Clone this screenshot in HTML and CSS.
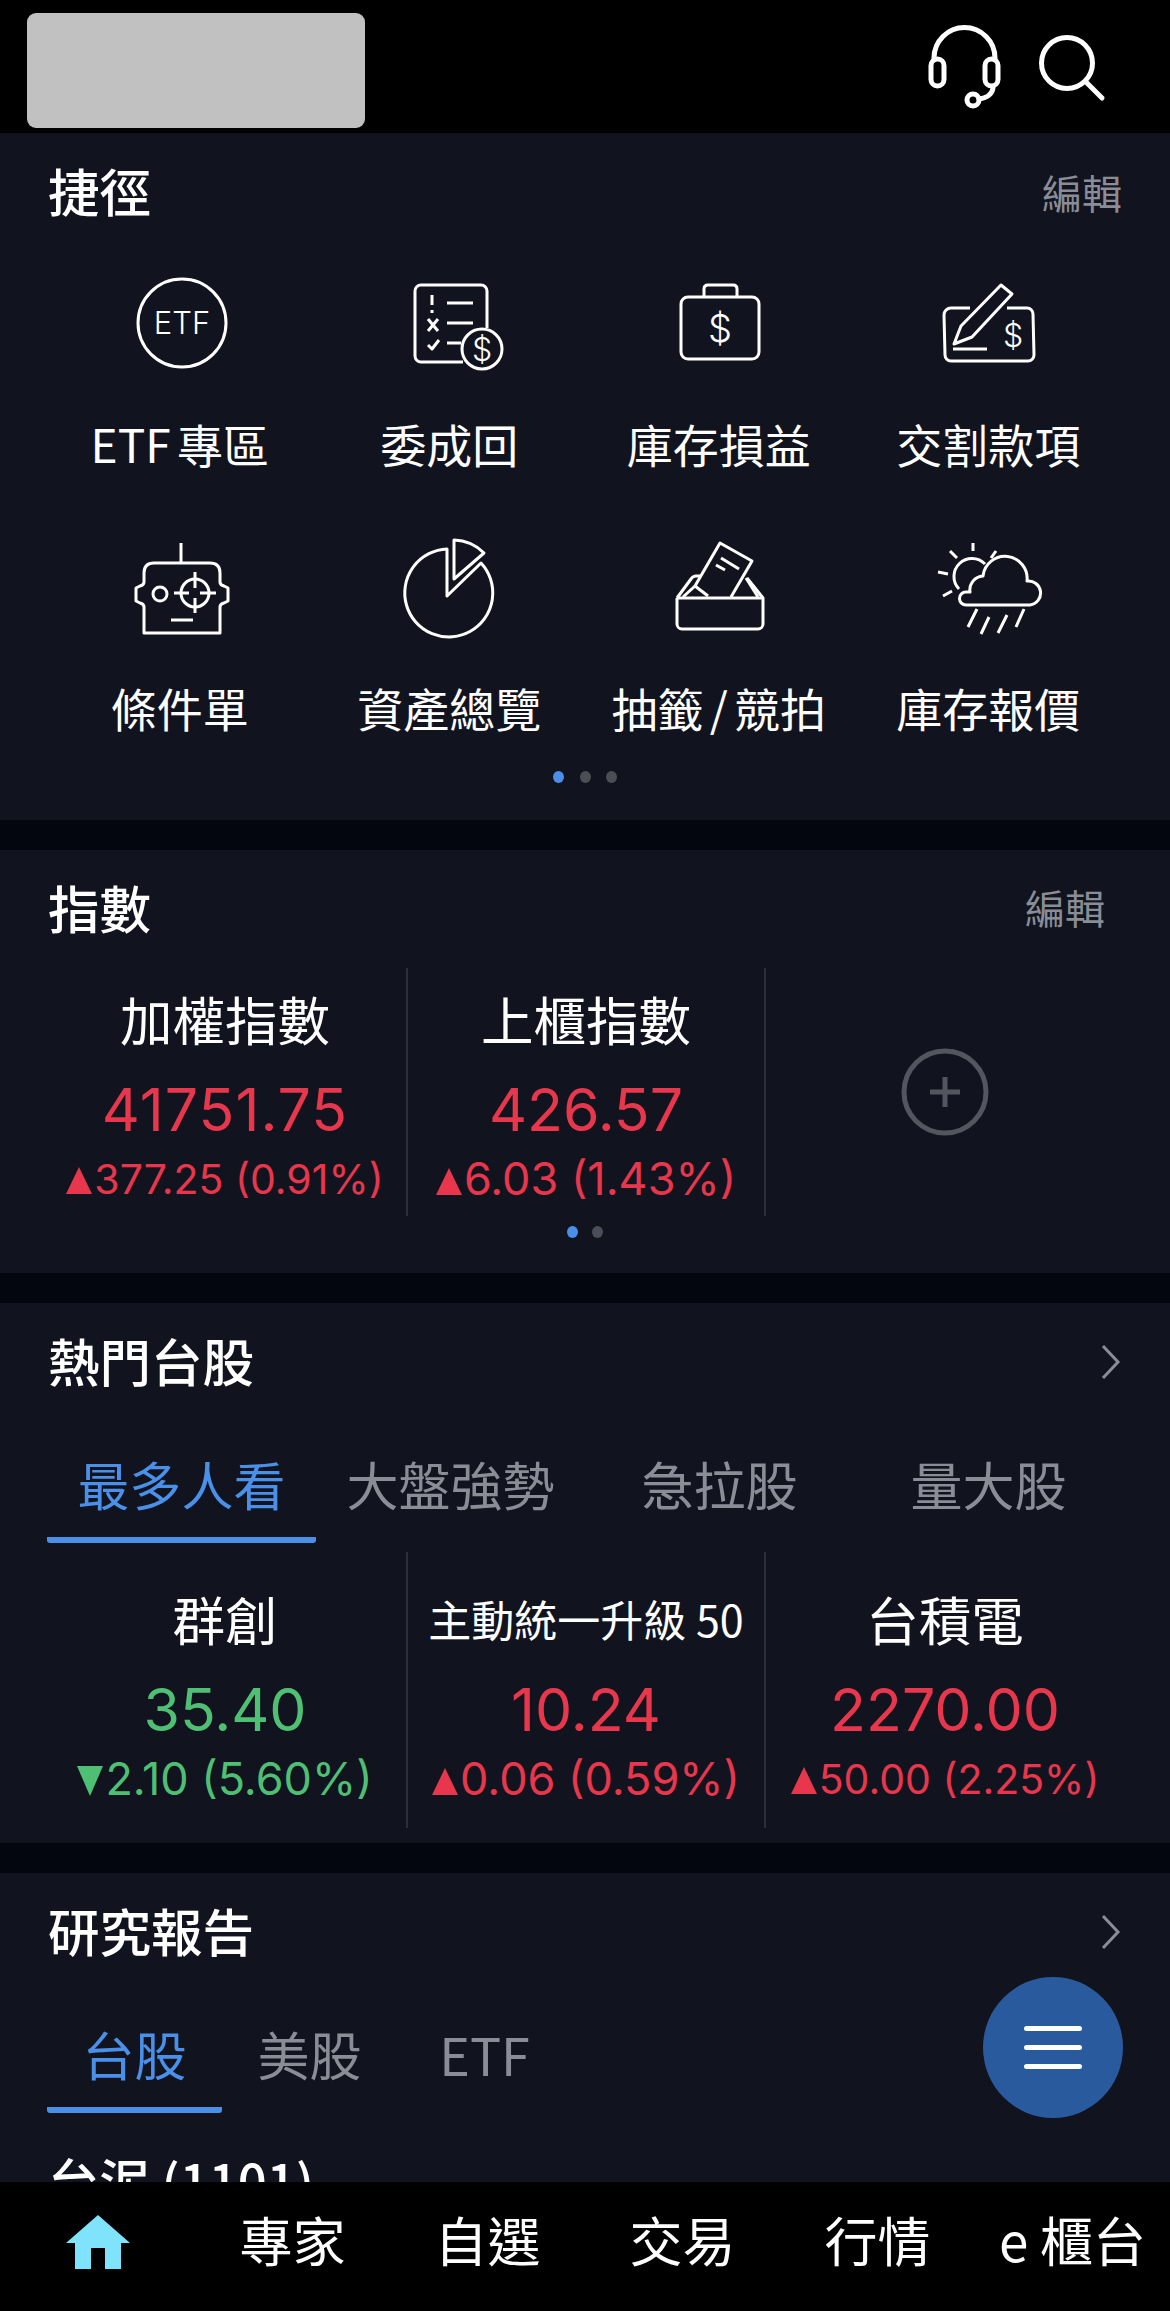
FILE: index.html
```html
<!DOCTYPE html>
<html lang="zh-Hant">
<head>
    <meta charset="UTF-8">
    <meta name="viewport" content="width=device-width, initial-scale=1.0">
    <title>首頁</title>
    <link rel="stylesheet" href="styles.css">
</head>
<body>

    <header class="top-bar">
        <div class="logo-box"></div>
        <div class="top-icons">
            <svg class="headset" viewBox="0 0 90 90">
                <path d="M14 40V38a30.5 30.5 0 0 1 61 0v2"/>
                <rect x="11" y="39" width="13" height="27" rx="6.5"/>
                <rect x="65" y="39" width="13" height="27" rx="6.5"/>
                <path d="M73 68C72 75 66 78 59 79"/>
                <circle cx="53" cy="80" r="6"/>
            </svg>
            <svg class="search" viewBox="0 0 80 90">
                <circle cx="37" cy="43" r="25.5"/>
                <path d="M57 63L72 78"/>
            </svg>
        </div>
    </header>

    <main class="content">

        <section class="panel shortcuts">
            <div class="panel-head">
                <h2>捷徑</h2>
                <span class="edit">編輯</span>
            </div>
            <div class="shortcut-grid">
                <div class="shortcut">
                    <svg class="line-icon" viewBox="0 0 120 110">
                        <circle cx="62" cy="53" r="44"/>
                        <text x="62" y="64" class="icon-text">ETF</text>
                    </svg>
                    <span class="tight-gap">ETF 專區</span>
                </div>
                <div class="shortcut">
                    <svg class="line-icon" viewBox="0 0 120 110">
                        <path d="M98 58V21a6 6 0 0 0-6-6H32a6 6 0 0 0-6 6v65a6 6 0 0 0 6 6h42"/>
                        <circle cx="93" cy="79" r="20"/>
                        <path d="M43 25V35M43 40V43M58 33H84M39 49L49 61M49 49L39 61M58 53H84M39 75L43 79L50 70M58 73H72"/>
                        <text x="93" y="91" class="icon-dollar">$</text>
                    </svg>
                    <span>委成回</span>
                </div>
                <div class="shortcut">
                    <svg class="line-icon" viewBox="0 0 120 110">
                        <rect x="22" y="27" width="78" height="62" rx="7"/>
                        <path d="M45 27V19q0-4 4-4h25q4 0 4 4v8"/>
                        <text x="61" y="72" class="icon-dollar big">$</text>
                    </svg>
                    <span>庫存損益</span>
                </div>
                <div class="shortcut">
                    <svg class="line-icon" viewBox="0 0 120 110">
                        <path d="M42 38H23a7 7 0 0 0-7 7l1 40a6 6 0 0 0 6 6h77a6 6 0 0 0 6-6l-1-41a6 6 0 0 0-6-6H79"/>
                        <path d="M26 74L33 56L73 15L84 24L44 67Z"/>
                        <path d="M25 79H59"/>
                        <text x="85" y="77" class="icon-dollar">$</text>
                    </svg>
                    <span>交割款項</span>
                </div>
                <div class="shortcut">
                    <svg class="line-icon" viewBox="0 3 120 110">
                        <path d="M61 12V32"/>
                        <path d="M24 102V76q0-3-4-4l-4-2V57l4-2q4-1 4-4V42q0-10 10-10h56q10 0 10 10v9q0 3 4 4l4 2v13l-4 2q-4 1-4 4v26Z"/>
                        <circle cx="40" cy="63" r="7"/>
                        <circle cx="75" cy="62" r="14"/>
                        <path d="M54 62H69M80 62H96M75 41V57M75 67V82M51 89H73"/>
                    </svg>
                    <span>條件單</span>
                </div>
                <div class="shortcut">
                    <svg class="line-icon" viewBox="0 3 120 110">
                        <path d="M58 18A44 44 0 1 0 92 32L58 65Z"/>
                        <path d="M65 9A44 44 0 0 1 95 22L65 48Z"/>
                    </svg>
                    <span>資產總覽</span>
                </div>
                <div class="shortcut">
                    <svg class="line-icon" viewBox="0 3 120 110">
                        <path d="M18 67V93a5 5 0 0 0 5 5H99a5 5 0 0 0 5-5V67L88 47"/>
                        <path d="M18 67L32 48q2-3 5-3h4"/>
                        <path d="M18 67H104"/>
                        <path d="M24 66L36 55"/>
                        <path d="M49 65L36 55L61 12L93 30L72 66"/>
                        <path d="M87 47L99 66"/>
                        <path d="M62 27L80 38M57 34L66 39"/>
                    </svg>
                    <span class="tight-gap">抽籤 / 競拍</span>
                </div>
                <div class="shortcut">
                    <svg class="line-icon" viewBox="0 3 120 110">
                        <path d="M45 12V20M22 20L29 27M68 20L63 27M10 41L20 43M15 65L24 60"/>
                        <path d="M57 33A18 18 0 0 0 31 58"/>
                        <path d="M38 74H102a12 12 0 0 0-3-24a22 22 0 0 0-44-5a14 14 0 0 0-13 16h-4a6.5 6.5 0 0 0 0 13Z"/>
                        <path d="M49 78L40 96M61 86L53 103M79 84L70 102M96 78L88 96"/>
                    </svg>
                    <span>庫存報價</span>
                </div>
            </div>
            <div class="dots">
                <i class="on"></i><i></i><i></i>
            </div>
        </section>

        <section class="panel indexes">
            <div class="panel-head index-head">
                <h2>指數</h2>
                <span class="edit">編輯</span>
            </div>
            <div class="quote-row">
                <div class="quote">
                    <div class="quote-name">加權指數</div>
                    <div class="quote-price red spaced">41751.75</div>
                    <div class="quote-change long red"><i class="tri-up"></i>377.25 (0.91%)</div>
                </div>
                <div class="quote">
                    <div class="quote-name">上櫃指數</div>
                    <div class="quote-price red">426.57</div>
                    <div class="quote-change red"><i class="tri-up"></i>6.03 (1.43%)</div>
                </div>
                <div class="quote add-quote">
                    <svg class="plus" viewBox="0 0 90 90">
                        <circle cx="45" cy="45" r="41"/>
                        <path d="M30 45H60M45 30V60"/>
                    </svg>
                </div>
            </div>
            <div class="dots two">
                <i class="on"></i><i></i>
            </div>
        </section>

        <section class="panel hot">
            <div class="panel-head">
                <h2>熱門台股</h2>
                <svg class="chevron" viewBox="0 0 24 36"><path d="M4 2L19 18L4 34"/></svg>
            </div>
            <div class="tabs">
                <div class="tab active">最多人看</div>
                <div class="tab">大盤強勢</div>
                <div class="tab">急拉股</div>
                <div class="tab">量大股</div>
            </div>
            <div class="quote-row stock-row">
                <div class="quote">
                    <div class="quote-name">群創</div>
                    <div class="quote-price green">35.40</div>
                    <div class="quote-change green"><i class="tri-down"></i>2.10 (5.60%)</div>
                </div>
                <div class="quote">
                    <div class="quote-name small-name">主動統一升級 50</div>
                    <div class="quote-price red">10.24</div>
                    <div class="quote-change red"><i class="tri-up"></i>0.06 (0.59%)</div>
                </div>
                <div class="quote">
                    <div class="quote-name">台積電</div>
                    <div class="quote-price red">2270.00</div>
                    <div class="quote-change long red"><i class="tri-up"></i>50.00 (2.25%)</div>
                </div>
            </div>
        </section>

        <section class="panel reports">
            <div class="panel-head">
                <h2>研究報告</h2>
                <svg class="chevron" viewBox="0 0 24 36"><path d="M4 2L19 18L4 34"/></svg>
            </div>
            <div class="tabs short-tabs">
                <div class="tab active">台股</div>
                <div class="tab">美股</div>
                <div class="tab">ETF</div>
            </div>
            <div class="report-title">台泥 (1101)</div>
        </section>

    </main>

    <button class="fab">
        <span></span><span></span><span></span>
    </button>

    <nav class="bottom-nav">
        <div class="nav-item">
            <svg class="home" viewBox="0 0 64 54">
                <path d="M32 0L64 28H55V54H39V33H25V54H9V28H0Z"/>
            </svg>
        </div>
        <div class="nav-item">專家</div>
        <div class="nav-item">自選</div>
        <div class="nav-item">交易</div>
        <div class="nav-item">行情</div>
        <div class="nav-item">e 櫃台</div>
    </nav>

</body>
</html>
```

FILE: styles.css
```css
* {
    box-sizing: border-box;
}

body {
    position: relative;
    display: flex;
    flex-direction: column;
    width: 1170px;
    height: 2311px;
    margin: 0;
    overflow: hidden;
    background-color: #000;
    color: #fff;
    font-family: "Noto Sans CJK TC", "Liberation Sans", sans-serif;
}

/* top bar */
.top-bar {
    display: flex;
    justify-content: space-between;
    flex: 0 0 133px;
    padding: 13px 60px 0 27px;
    background-color: #000;
}

.logo-box {
    width: 338px;
    height: 115px;
    background-color: #c1c1c1;
    border-radius: 9px;
}

.top-icons {
    display: flex;
    gap: 20px;
    margin-top: 7px;
}

.top-icons svg {
    height: 90px;
    fill: none;
    stroke: #fff;
    stroke-width: 5;
    stroke-linecap: round;
}

.headset { width: 90px; }
.search { width: 80px; }

/* sections */
.content {
    flex: 1;
    min-height: 0;
    overflow: hidden;
    background-color: #03060f;
}

.panel {
    margin-bottom: 30px;
    background-color: #11141f;
}

.panel-head {
    display: flex;
    justify-content: space-between;
    align-items: center;
    height: 118px;
    padding: 0 47px 5px 48px;
}

.panel-head h2 {
    margin: 0;
    font-size: 51.5px;
    font-weight: 500;
    line-height: 72px;
}

.edit {
    margin-top: 5px;
    margin-right: 1px;
    font-size: 40px;
    line-height: 56px;
    color: #8a8d96;
}

.index-head {
    padding-right: 64px;
}

.index-head .edit {
    margin-top: 0;
}

.chevron {
    width: 24px;
    height: 36px;
    margin-top: 5px;
    fill: none;
    stroke: #8a8d96;
    stroke-width: 3;
}

/* shortcuts */
.shortcut-grid {
    display: grid;
    grid-template-columns: repeat(4, 269.5px);
    row-gap: 40px;
    padding: 0 0 0 45px;
}

.shortcut {
    display: flex;
    flex-direction: column;
    align-items: center;
    padding-top: 19px;
    font-size: 46px;
    line-height: 64px;
}

.line-icon {
    width: 120px;
    height: 110px;
    margin-bottom: 31px;
    fill: none;
    stroke: #fff;
    stroke-width: 3;
    stroke-linejoin: round;
}

.tight-gap {
    word-spacing: -4px;
}

.icon-text {
    fill: #fff;
    stroke: none;
    font-family: Inter, sans-serif;
    font-size: 31px;
    font-weight: 300;
    text-anchor: middle;
}

.icon-dollar {
    fill: #fff;
    stroke: none;
    font-family: Inter, sans-serif;
    font-size: 32px;
    font-weight: 300;
    text-anchor: middle;
}

.icon-dollar.big {
    font-size: 38px;
}

.dots {
    display: flex;
    justify-content: center;
    gap: 15.5px;
    margin-top: 32px;
    padding-bottom: 37px;
}

.dots i {
    width: 11px;
    height: 12px;
    border-radius: 50%;
    background-color: #4c4e55;
}

.dots i.on {
    background-color: #4a8fe8;
}

.dots.two {
    gap: 14px;
    margin-top: 10px;
    padding-bottom: 35px;
}

/* quote cells */
.quote-row {
    display: grid;
    grid-template-columns: 364px 358px 358px;
    height: 248px;
    padding-left: 44px;
}

.quote {
    padding-top: 14px;
    text-align: center;
    border-right: 2px solid #2c2f39;
    white-space: nowrap;
}

.quote-name {
    font-size: 52.5px;
    line-height: 72px;
}

.small-name {
    font-size: 43px;
}

.quote-price {
    margin-top: 20px;
    font-family: Inter, "Liberation Sans", sans-serif;
    font-size: 59px;
    line-height: 72px;
}

.quote-price.spaced {
    letter-spacing: 1px;
}

.quote-change {
    margin-top: 5px;
    font-family: Inter, "Liberation Sans", sans-serif;
    font-size: 45px;
    line-height: 56px;
}

.quote-change.long {
    font-size: 41px;
}

.red { color: #e8364c; }
.green { color: #4fbf74; }

.tri-up,
.tri-down {
    display: inline-block;
    width: 0;
    height: 0;
    margin-right: 2px;
    border-left: 13px solid transparent;
    border-right: 13px solid transparent;
}

.tri-up {
    border-bottom: 27px solid #e8364c;
}

.tri-down {
    border-top: 30px solid #4fbf74;
    vertical-align: -1px;
}

.add-quote {
    display: flex;
    justify-content: center;
    align-items: center;
    padding-top: 0;
}

.plus {
    width: 90px;
    height: 90px;
    fill: none;
    stroke: #53565f;
    stroke-width: 5;
}

/* tabs */
.tabs {
    display: grid;
    grid-template-columns: repeat(4, 269px);
    padding-left: 47px;
}

.short-tabs {
    grid-template-columns: repeat(3, 175px);
}

.tab {
    padding: 27px 0 17px;
    border-bottom: 6px solid transparent;
    border-radius: 3px;
    text-align: center;
    font-size: 52px;
    line-height: 72px;
    color: #8a8d96;
}

.tab.active {
    color: #4a8fe8;
    border-bottom-color: #4a8fe8;
}

.hot {
    padding-bottom: 15px;
}

.stock-row {
    height: 276px;
    margin-top: 9px;
}

.stock-row .quote {
    padding-top: 30px;
}

.stock-row .quote:last-child,
.indexes .quote:last-child {
    border-right: 0;
}

.report-title {
    margin-top: 31px;
    padding-left: 48px;
    font-size: 51px;
    font-weight: 500;
    line-height: 72px;
}

/* floating menu button */
.fab {
    position: absolute;
    top: 1977px;
    left: 983px;
    display: flex;
    flex-direction: column;
    justify-content: center;
    align-items: center;
    gap: 14px;
    width: 140px;
    height: 141px;
    padding: 0;
    border: 0;
    border-radius: 50%;
    background-color: #2a5a9e;
}

.fab span {
    width: 58px;
    height: 5px;
    border-radius: 3px;
    background-color: #fff;
}

/* bottom nav */
.bottom-nav {
    display: grid;
    grid-template-columns: repeat(6, 195px);
    flex: 0 0 129px;
    background-color: #000;
}

.nav-item {
    padding-top: 21px;
    text-align: center;
    font-size: 53px;
    line-height: 72px;
}

.home {
    display: block;
    width: 64px;
    height: 54px;
    margin: 12px auto 0;
    fill: #7fe3fb;
}
```
